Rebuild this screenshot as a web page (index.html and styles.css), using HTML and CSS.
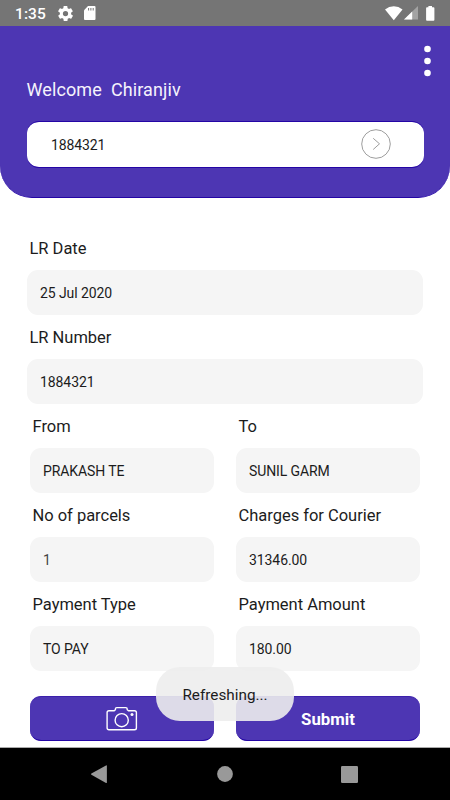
FILE: index.html
```html
<!DOCTYPE html>
<html lang="en">
<head>
<meta charset="utf-8">
<title>Courier receipt</title>
<link rel="stylesheet" href="styles.css">
</head>
<body>
<div class="screen">
  <div class="status">
    <span class="clock">1:35</span>
    <svg class="gear" width="16" height="16" viewBox="2 2 20 20"><path fill="#fff" fill-rule="evenodd" d="M19.4 13c0-.3.1-.6.1-1s0-.7-.1-1l2.1-1.600c.2-.2.2-.4.1-.6l-2-3.500c-.1-.2-.4-.3-.6-.2l-2.500 1c-.5-.4-1.100-.7-1.700-1l-.4-2.600c0-.3-.2-.5-.4-.5h-4c-.2 0-.4.2-.5.4l-.4 2.700c-.6.2-1.100.6-1.700 1l-2.500-1c-.2-.1-.5 0-.6.200l-2 3.500c-.1.2-.1.500.1.600L4.600 11c0 .3-.1.600-.1 1s0 .7.1 1l-2.100 1.600c-.2.2-.2.4-.1.600l2 3.500c.1.200.4.300.6.200l2.500-1c.5.4 1.100.7 1.700 1l.4 2.600c0 .3.200.5.500.5h4c.2 0 .5-.2.5-.4l.4-2.700c.6-.2 1.100-.6 1.700-1l2.500 1c.2.1.500 0 .6-.200l2-3.500c.1-.2.100-.5-.1-.600zM12 15.500a3.500 3.500 0 1 1 0-7 3.500 3.500 0 0 1 0 7z"/></svg>
    <svg class="sd" width="12" height="14" viewBox="0 0 12 14"><path fill="#fff" d="M4 0H10.500Q11.500 0 11.500 1V13Q11.500 14 10.500 14H1Q0 14 0 13V4.300z"/><path stroke="#757575" stroke-width="1" d="M4.600 2v2.500M6.900 2v2.500M9.200 2v2.500"/></svg>
    <span class="grow"></span>
    <svg class="wifi" width="18" height="15" viewBox="0 0 18 15"><path fill="#fff" d="M0 3.500Q4 .3 8.800.3T17.500 3.500L8.800 14.200z"/></svg>
    <svg class="signal" width="14" height="14" viewBox="0 0 14 14"><path fill="#a3a3a3" d="M0 13.600L14 0V13.600z"/><path fill="#fff" d="M0 13.600L8.200 5.600V13.600z"/></svg>
    <svg class="battery" width="9" height="15" viewBox="0 0 9 15"><path fill="#fff" d="M2.400 0h3.600v1.300h1.500q.9 0 .9.900v11.600q0 .9-.9.900H1q-.9 0-.9-.9V2.200q0-.9.900-.9h1.400z"/></svg>
  </div>
  <header class="header">
    <svg class="more" width="8" height="32" viewBox="0 0 8 32"><g fill="#fff"><circle cx="4" cy="4" r="3.300"/><circle cx="4" cy="16" r="3.300"/><circle cx="4" cy="28" r="3.300"/></g></svg>
    <h1 class="welcome">Welcome&nbsp; Chiranjiv</h1>
    <div class="search">
      <span class="query">1884321</span>
      <svg class="go" width="30" height="30" viewBox="0 0 30 30" fill="none" stroke="#929292"><circle cx="15" cy="15" r="14.300" stroke-width=".9"/><path d="M12.200 9.300L18.500 14.800L12.200 20.500" stroke-width=".9"/></svg>
    </div>
  </header>
  <main class="form">
    <div class="field"><div class="label">LR Date</div><div class="value">25 Jul 2020</div></div>
    <div class="field"><div class="label">LR Number</div><div class="value">1884321</div></div>
    <div class="pairs">
      <div class="field"><div class="label">From</div><div class="value caps">PRAKASH TE</div></div>
      <div class="field"><div class="label">To</div><div class="value caps">SUNIL GARM</div></div>
      <div class="field"><div class="label">No of parcels</div><div class="value muted">1</div></div>
      <div class="field"><div class="label">Charges for Courier</div><div class="value">31346.00</div></div>
      <div class="field"><div class="label">Payment Type</div><div class="value caps">TO PAY</div></div>
      <div class="field"><div class="label">Payment Amount</div><div class="value">180.00</div></div>
    </div>
    <div class="actions">
      <div class="button"><svg width="32" height="26" viewBox="0 0 32 26" fill="none" stroke="#fff" stroke-width="1.400"><path d="M3 4.700H8.200L9.400 3.700V3Q9.400 1.600 10.800 1.600H19.800Q21.200 1.600 21.200 3V3.700L22.500 4.700H28.500Q30.400 4.700 30.400 6.600V22Q30.400 23.800 28.500 23.800H3Q1.100 23.800 1.100 22V6.600Q1.100 4.700 3 4.700z"/><circle cx="15.700" cy="14.200" r="6.600"/><circle cx="26" cy="8.500" r="1.500" fill="#fff" stroke="none"/></svg></div>
      <div class="button">Submit</div>
    </div>
  </main>
  <nav class="nav">
    <svg width="16" height="19" viewBox="0 0 16 19"><path fill="#999" d="M.4 8.600L15 .4Q15.900 0 15.900 1V17.200Q15.900 18.400 15 17.900L.4 9.700Q-.2 9.200.4 8.600z"/></svg>
    <svg width="16" height="16" viewBox="0 0 16 16"><circle cx="8" cy="8" r="7.900" fill="#999"/></svg>
    <svg width="17" height="17" viewBox="0 0 17 17"><rect width="17" height="17" rx="1.200" fill="#999"/></svg>
  </nav>
  <div class="toast">Refreshing...</div>
</div>
</body>
</html>
```
FILE: styles.css
```css
* { box-sizing: border-box; }
body { margin: 0; font-family: Roboto, sans-serif; color: #1c1c1c; background: #fff; }
svg { display: block; flex: none; }
.screen { position: relative; width: 450px; height: 800px; overflow: hidden; display: flex; flex-direction: column; }
.status { height: 26px; flex: none; background: #757575; display: flex; align-items: center; padding: 0 15.500px 0 15px; color: #fff; }
.clock { font-size: 15.500px; font-weight: 500; width: 43px; letter-spacing: .1px; padding-top: 2px; }
.gear { width: 15px; height: 15px; }
.sd { margin-left: 11px; }
.grow { flex: 1; }
.signal { margin-left: 1px; }
.battery { margin-left: 8px; }
.header { height: 171.500px; flex: none; background: #4d36b3; border-radius: 0 0 32px 32px; border-bottom: 1px solid #2405a5; padding: 19px 26.500px 0 26.500px; display: flex; flex-direction: column; }
.more { align-self: flex-end; margin-right: -8px; transform: translateX(-.5px); }
.welcome { margin: 0; font-size: 18px; line-height: 25px; font-weight: 400; color: #f5f3fc; letter-spacing: .1px; }
.search { margin-top: 19px; height: 47px; flex: none; border-top: 1px solid #2405a5; border-bottom: 1px solid #2405a5; border-radius: 12px; background: #fff; padding: 0 32.500px 0 24.500px; display: flex; align-items: center; justify-content: space-between; font-size: 14px; letter-spacing: -.1px; background-clip: padding-box; }
.query { padding-top: 1px; }
.go { margin-bottom: 2px; }
.form { flex: 1; padding: 28.300px 27px 0; }
.label { height: 44.300px; line-height: 46px; font-size: 16.500px; letter-spacing: -.02px; padding-left: 2.500px; white-space: nowrap; }
.value { height: 44.700px; border-radius: 11px; background: #f5f5f5; font-size: 14px; line-height: 46px; padding-left: 13px; letter-spacing: -.08px; }
.caps { letter-spacing: -.1px; }
.muted { color: #444; }
.pairs { display: grid; grid-template-columns: 184px 184px; column-gap: 22px; margin-left: 3px; }
.actions { display: flex; gap: 22px; margin: 25.500px 0 0 3px; }
.button { width: 184px; height: 44.700px; border-radius: 11px; background: #4d36b3; border-bottom: 1px solid #2405a5; border-top: 1px solid #3b20ab; display: flex; align-items: center; justify-content: center; color: #fff; font-size: 16.800px; font-weight: 700; }
.nav { height: 53px; flex: none; background: #000; border-top: 1px solid #aaa; display: flex; align-items: center; justify-content: space-between; padding: 0 92.500px 0 91px; }
.nav svg:nth-child(2) { margin-left: 2px; }
.toast { position: absolute; left: 156px; top: 667.200px; width: 138px; height: 54px; border-radius: 24px; background: rgba(237, 237, 237, .9); font-size: 15.300px; line-height: 57px; text-align: center; }
```
